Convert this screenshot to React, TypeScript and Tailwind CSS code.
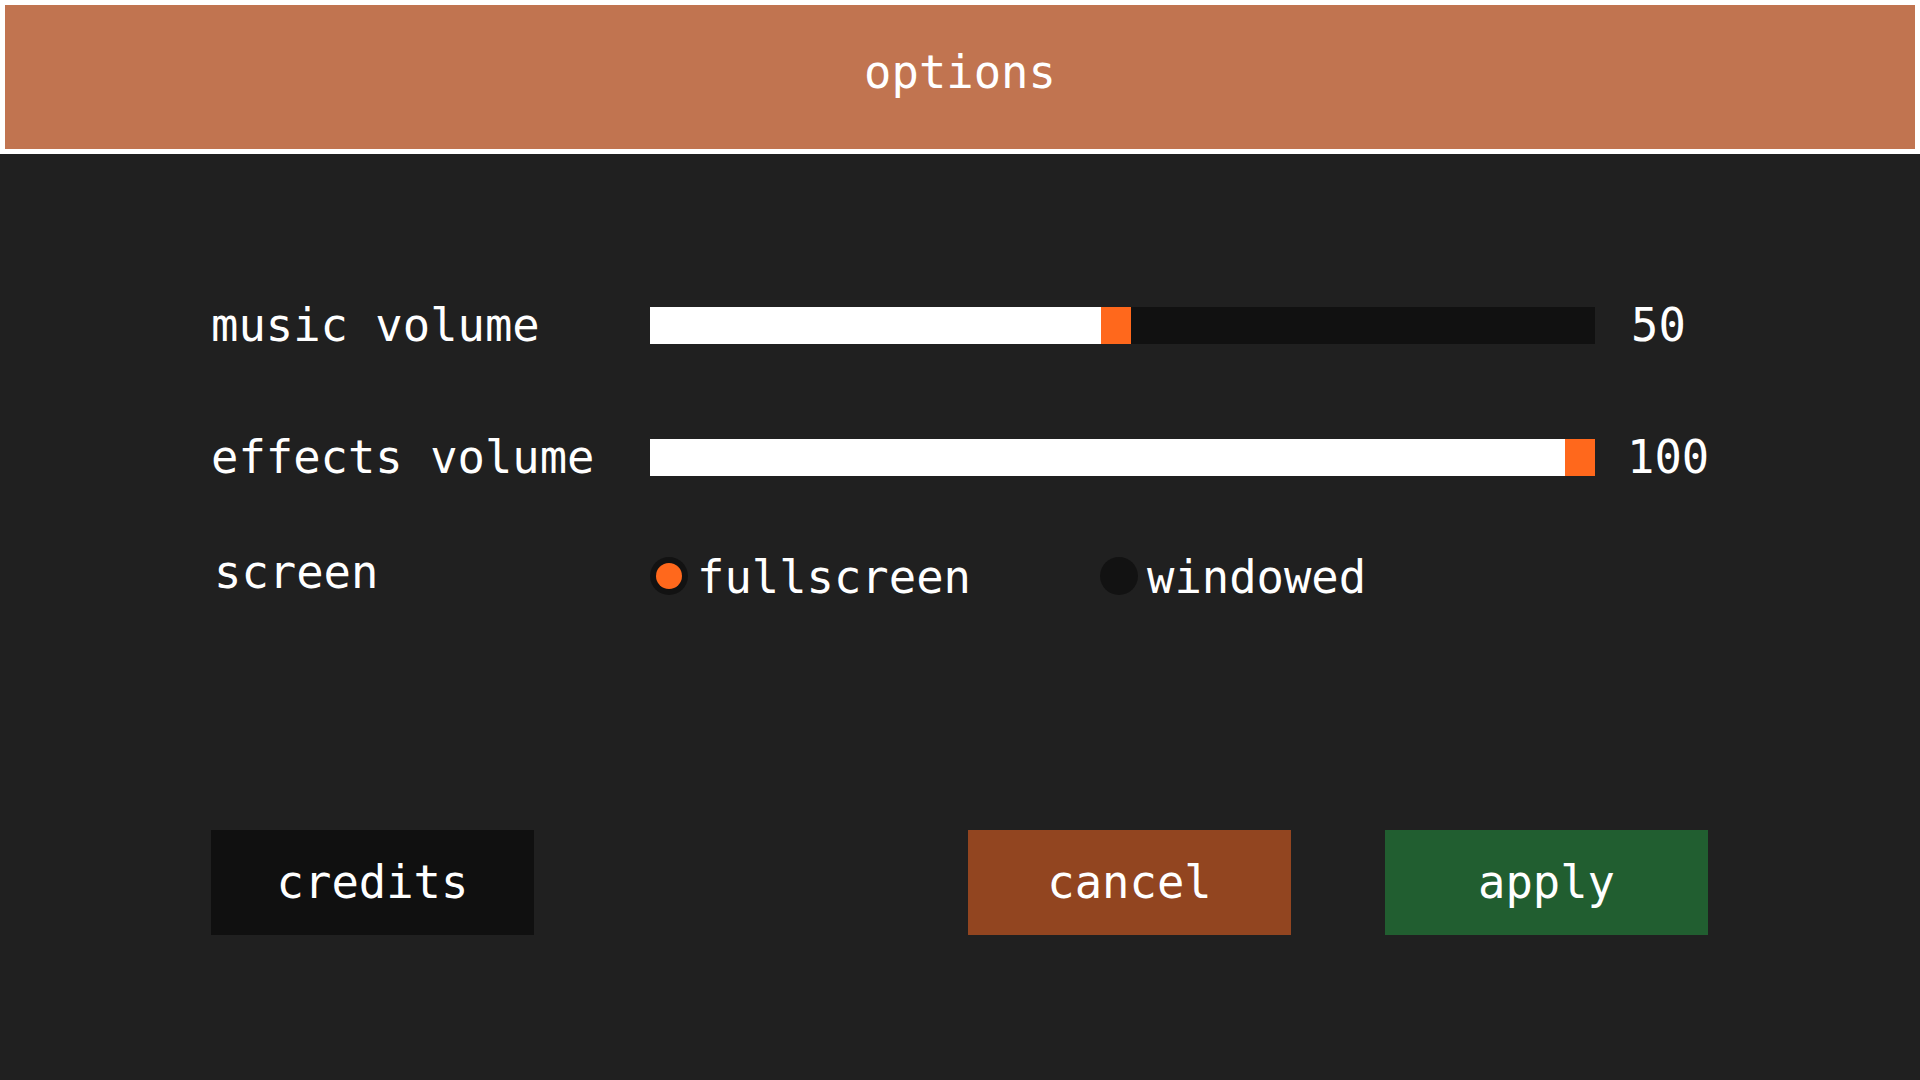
import { useState } from 'react'

const MONO = { fontFamily: '"DejaVu Sans Mono", "Liberation Mono", monospace' }

function Slider({ value }: { value: number }) {
  // track 945px, grabber 30px
  const fill = Math.round((945 - 30) * (value / 100) - (value === 50 ? 7 : 0))
  return (
    <div className="flex h-[37px] w-[945px] bg-[#111111]">
      <div className="h-full bg-white" style={{ width: fill }} />
      <div className="h-full w-[30px] bg-[#ff681c]" />
    </div>
  )
}

function Radio({ checked, label, onClick }: { checked: boolean; label: string; onClick: () => void }) {
  return (
    <button onClick={onClick} className="flex w-[450px] items-center gap-[9px] text-left">
      <span className="flex h-[38px] w-[38px] items-center justify-center rounded-full bg-[#121212]">
        {checked && <span className="h-[26px] w-[26px] rounded-full bg-[#ff681c]" />}
      </span>
      <span className="mt-[3px] text-[45.5px] leading-none text-white">{label}</span>
    </button>
  )
}

export default function App() {
  const [screen, setScreen] = useState<'fullscreen' | 'windowed'>('fullscreen')

  return (
    <div className="flex min-h-[1080px] flex-col bg-[#202020] text-white" style={MONO}>
      <div className="bg-white p-[5px]">
        <div className="flex h-[144px] items-center justify-center bg-[#c17450] pb-[8px]">
          <span className="text-[45.5px] leading-none text-white">options</span>
        </div>
      </div>

      <div className="flex flex-col pl-[211px] pt-[153px]">
        <div className="flex h-[37px] items-center">
          <span className="w-[439px] text-[45.5px] leading-none">music volume</span>
          <Slider value={50} />
          <span className="pl-[36px] text-[45.5px] leading-none">50</span>
        </div>

        <div className="mt-[95px] flex h-[37px] items-center">
          <span className="w-[439px] text-[45.5px] leading-none">effects volume</span>
          <Slider value={100} />
          <span className="pl-[32px] text-[45.5px] leading-none">100</span>
        </div>

        <div className="mt-[81px] flex h-[38px] items-center">
          <span className="-mt-[7px] w-[439px] pl-[3px] text-[45.5px] leading-none">screen</span>
          <Radio checked={screen === 'fullscreen'} label="fullscreen" onClick={() => setScreen('fullscreen')} />
          <Radio checked={screen === 'windowed'} label="windowed" onClick={() => setScreen('windowed')} />
        </div>

        <div className="mt-[235px] flex">
          <button className="flex h-[105px] w-[323px] items-center justify-center bg-[#101010] text-[45.5px] leading-none">
            credits
          </button>
          <button className="ml-[434px] flex h-[105px] w-[323px] items-center justify-center bg-[#924520] text-[45.5px] leading-none">
            cancel
          </button>
          <button className="ml-[94px] flex h-[105px] w-[323px] items-center justify-center bg-[#215e30] text-[45.5px] leading-none">
            apply
          </button>
        </div>
      </div>
    </div>
  )
}
